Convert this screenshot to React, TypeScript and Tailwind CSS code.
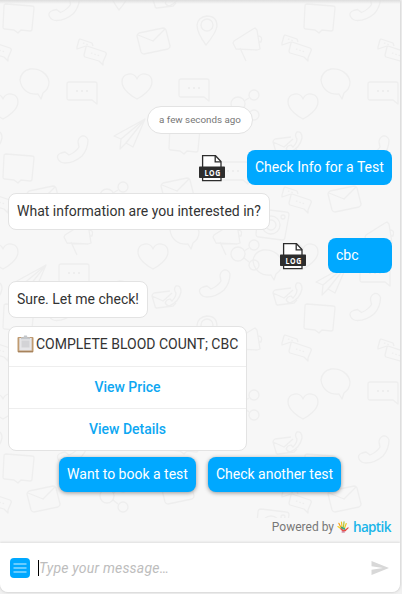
import React from "react";

const shapes: Record<string, React.ReactNode> = {
  box: <path d="M3 0 29 2Q31 2 31 4L29 25Q29 27 27 27L18 26 15 29 11 26 2 25Q0 25 0 23L1 2Q1 0 3 0Z" />,
  phone: <path d="M25 0Q29-1 31 4 31 13 25 20 17 27 8 27 3 27 1 23-1 19 4 17L8 16 12 19Q19 16 22 11L21 6Q21 2 25 0Z" />,
  pin: <><path d="M10 0Q20 0 20 10 19 17 9 29 0 17 0 9 1 1 10 0Z" /><circle cx="10" cy="9" r="6" /></>,
  mailphone: <><path d="M18 5 2 7Q0 8 0 10L3 20Q3 22 5 22L21 20 24 17M0 10 11 15 20 7" /><path d="M24 0Q29-1 29 6 27 16 17 20 11 18 15 14L18 13 20 15Q24 11 24 7 21 3 24 0Z" /></>,
  duo: <><path d="M10 7 1 10 1 8 3 1 4 0 16 4 17 7" /><path d="M11 7 29 13Q31 14 30 16L27 23 27 26 23 22 9 18Q8 17 8 16L10 8Z" /><path strokeDasharray="1.5 2" d="M15 14 24 17M7 4 13 6" /></>,
  mail: <><path d="M2 5 26 0Q28 0 29 2L33 18Q33 20 31 21L7 26Q5 26 4 24L0 8Q0 6 2 5Z" /><path d="M1 7 16 13 28 1" /></>,
  horn: <><path d="M1 13 20 1 22 0 24 2 27 21 24 22 3 21 0 15ZM7 20 13 33M25 8Q30 8 28 14L26 14" /></>,
  oval: <path d="M10 0C20-1 28 5 29 13Q29 20 23 24L21 30 18 25C8 26 1 20 0 11Q1 2 10 0Z" />,
  chat: <><path d="M2 0H28Q30 0 30 2V22L25 18H2Q0 18 0 16V2Q0 0 2 0Z" /><path strokeDasharray="2 3" strokeWidth="2" d="M9 9H21" /></>,
  heart: <path d="M15 25C11 23 0 16 0 8 0-1 12-3 15 5 18-3 30-1 30 8 30 16 19 23 15 25Z" />,
  share: <><circle cx="7" cy="15" r="7" /><circle cx="23" cy="6" r="5" /><circle cx="23" cy="26" r="5" /><path d="M13 12 18 9M13 19 18 23" /></>,
  plane: <path d="M31 0 0 17 7 20 31 0 12 24 19 28ZM7 20 6 30 12 24" />,
  camera: <><path d="M5 0 30 3Q33 3 33 6L29 28Q29 31 26 31L3 28Q0 28 0 25L2 3Q2 0 5 0Z" /><circle cx="15" cy="16" r="9" /><circle cx="15" cy="16" r="5" /><circle cx="27" cy="8" r="2" /></>,
};

const placed: [string, number, number][] = [
  ["box", 3, 4], ["phone", 48.5, -6.5], ["pin", 110, -19], ["mailphone", 152, -14],
  ["duo", 76, 39], ["mail", 137, 28], ["pin", 197, 16], ["horn", 233, 28],
  ["duo", 281, 35], ["oval", 20, 69], ["chat", 67, 82], ["heart", 122, 74],
  ["chat", 179, 79], ["share", 231, 89], ["heart", 288, 94], ["mailphone", 273, 132],
  ["phone", 57, 136], ["plane", 114, 119], ["box", 169, 125], ["box", 3, 154],
  ["mail", 27, 186], ["share", 100, 181], ["mail", 161, 178], ["duo", 281, 187],
  ["chat", 218, 162], ["camera", 256, 209], ["horn", 213, 222], ["horn", 64, 222],
  ["oval", 170, 219], ["oval", 253, 250], ["heart", 288, 244], ["heart", 138, 244],
  ["plane", 15, 265], ["chat", 59, 264], ["phone", 199, 270], ["mailphone", 273, 283],
  ["share", 231, 239],
];

const origins = [[0, 0], [301, 0], [-300, 0], [0, 300], [301, 300], [-300, 300]];

function Doodles() {
  return (
    <svg className="absolute inset-0 h-[518px] w-full" fill="none" stroke="#eeeeee" strokeWidth="1.3" strokeLinejoin="round">
      {origins.map(([ox, oy]) =>
        placed.map(([name, x, y], i) => (
          <g key={`${ox}-${oy}-${i}`} transform={`translate(${ox + x} ${oy + y})`}>{shapes[name]}</g>
        ))
      )}
    </svg>
  );
}

function LogIcon() {
  return (
    <svg width="26" height="27" viewBox="0 0 26 27" className="shrink-0">
      <path d="M3.6.7H16.5L22 6.5V25.7H3.6Z" fill="#fff" stroke="#2d2d2d" strokeWidth="1.3" />
      <path d="M16.2.8V6.8H22" fill="none" stroke="#2d2d2d" strokeWidth="1.3" />
      <rect y="11.5" width="26" height="11.5" rx=".7" fill="#2d2d2d" />
      <g transform="translate(5.6 20.7) scale(.78 1)">
        <text fontFamily="Open Sans" fontWeight="700" fontSize="9" letterSpacing=".7" fill="#fff">LOG</text>
      </g>
    </svg>
  );
}

function Clipboard() {
  return (
    <svg width="17" height="18" viewBox="0 0 17 18" className="mr-0.5 shrink-0">
      <rect x=".5" y="2" width="16" height="15.2" rx="1" fill="#c09b71" />
      <path d="M1 16.8H16" stroke="#94704c" strokeWidth=".8" />
      <rect x="2.3" y="3" width="12.4" height="12.5" fill="#e6e6e9" />
      <path d="M4.5 5.5H12.5V12.5H4.5Z" fill="#d3d3d6" />
      <path d="M4 4.2V2.2H6.5L7.2.5H9.8L10.5 2.2H13V4.2Z" fill="#c3c7cb" />
    </svg>
  );
}

function Hand() {
  return (
    <svg width="12" height="14" viewBox="0 0 13 14" fill="none" strokeLinecap="round" strokeWidth="1.3">
      <path d="M4 7 2 3" stroke="#f5a11c" />
      <path d="M5.5 7 4.8 1.6" stroke="#f3c51c" />
      <path d="M7 7 7.6 1.3" stroke="#a5c43d" />
      <path d="M8.2 8 10 3.3" stroke="#f0c726" />
      <path d="M4 8.5 1 6.5" stroke="#f4cf24" />
      <path d="M4.5 9 6.5 11 9 10.6" stroke="#e8524b" strokeWidth="1.8" />
      <path d="M5 7.5 8 9" stroke="#39a979" strokeWidth="1.9" />
      <path d="M9.2 10.5 12 8" stroke="#e8453b" />
      <path d="M5.5 12.4H8" stroke="#b64b78" strokeWidth="1" />
    </svg>
  );
}

function Sent({ children, width }: { children: React.ReactNode; width: string }) {
  return (
    <div className="mb-2 flex h-[35px] items-center justify-end">
      <div className="mr-[22px] pt-px"><LogIcon /></div>
      <div className={`h-[35px] rounded-lg bg-[#00a8ff] px-2 leading-[35px] whitespace-nowrap text-white ${width}`}>{children}</div>
    </div>
  );
}

function Received({ children, width }: { children: React.ReactNode; width: string }) {
  return (
    <div className={`mb-2 h-[37px] rounded-lg border border-[#e3e3e3] bg-white px-2 leading-[35px] whitespace-nowrap text-[#333] ${width}`}>
      {children}
    </div>
  );
}

export default function App() {
  return (
    <div className="h-[594px] w-[402px] overflow-hidden bg-[#f1f1f1] font-['Roboto',sans-serif] text-[14px]">
      <div className="relative flex h-[592px] w-[400px] flex-col overflow-hidden rounded-b-lg bg-[#f7f7f7] shadow-[0_0_3px_#bbb]">
        <Doodles />
        <div className="absolute inset-x-0 top-0 h-1 bg-linear-to-b from-[#dddddd] to-transparent" />
        <main className="relative h-[543px] px-2 pt-[106px]">
          <div className="mx-auto mb-4 h-7 w-[106px] rounded-full border border-[#e3e3e3] bg-white text-center text-[9.8px] leading-[26px] text-[#777]">a few seconds ago</div>
          <Sent width="w-[145px]">Check Info for a Test</Sent>
          <Received width="w-[262px]">What information are you interested in?</Received>
          <Sent width="w-16">cbc</Sent>
          <Received width="w-[140px]">Sure. Let me check!</Received>
          <section className="h-[125px] w-[239px] overflow-hidden rounded-lg border border-[#e3e3e3] bg-white">
            <div className="flex h-[39px] items-center px-2 pb-[5px] whitespace-nowrap text-[#333]"><Clipboard />COMPLETE BLOOD COUNT; CBC</div>
            <button className="block h-[42px] w-full border-t border-[#eeeeee] font-medium text-[#0da7f2]">View Price</button>
            <button className="block h-[42px] w-full border-t border-[#eeeeee] font-medium text-[#0da7f2]">View Details</button>
          </section>
          <div className="mt-1.5 flex justify-center gap-3">
            <button className="h-[35px] w-[137px] rounded-lg bg-[#00a8ff] whitespace-nowrap text-white shadow-[0_1px_4px_#0006]">Want to book a test</button>
            <button className="h-[35px] w-[133px] rounded-lg bg-[#00a8ff] whitespace-nowrap text-white shadow-[0_1px_4px_#0006]">Check another test</button>
          </div>
          <div className="mt-[26px] flex h-[18px] items-center justify-end pr-[1px] text-[12px] text-[#777]">
            <span className="mr-[3px]">Powered by</span><Hand />
            <span className="ml-[4px] w-[38px] pb-px font-['Open_Sans',sans-serif] text-[13.5px] leading-[18px] font-semibold tracking-[-0.65px] text-[#19b5e9]">haptik</span>
          </div>
        </main>
        <footer className="relative flex h-[49px] items-center bg-white pl-[10px] shadow-[0_-1px_2px_#ddd]">
          <svg width="20" height="20" viewBox="0 0 20 20">
            <rect width="20" height="20" rx="4" fill="#00a8ff" />
            <path d="M3.5 6H16.5M3.5 10H16.5M3.5 14H16.5" stroke="#8bd8ff" strokeWidth="1.5" />
          </svg>
          <span className="ml-2 h-4 w-px bg-black" />
          <span className="pt-0.5 tracking-[0.2px] text-[#bdbdbd] italic">Type your message…</span>
          <svg className="mr-[11px] ml-auto" width="18" height="16" viewBox="0 0 18 16">
            <path d="M.5 1 18 8 .5 15V9.8L12 8 .5 6.2Z" fill="#d8d8d8" />
          </svg>
        </footer>
      </div>
    </div>
  );
}
